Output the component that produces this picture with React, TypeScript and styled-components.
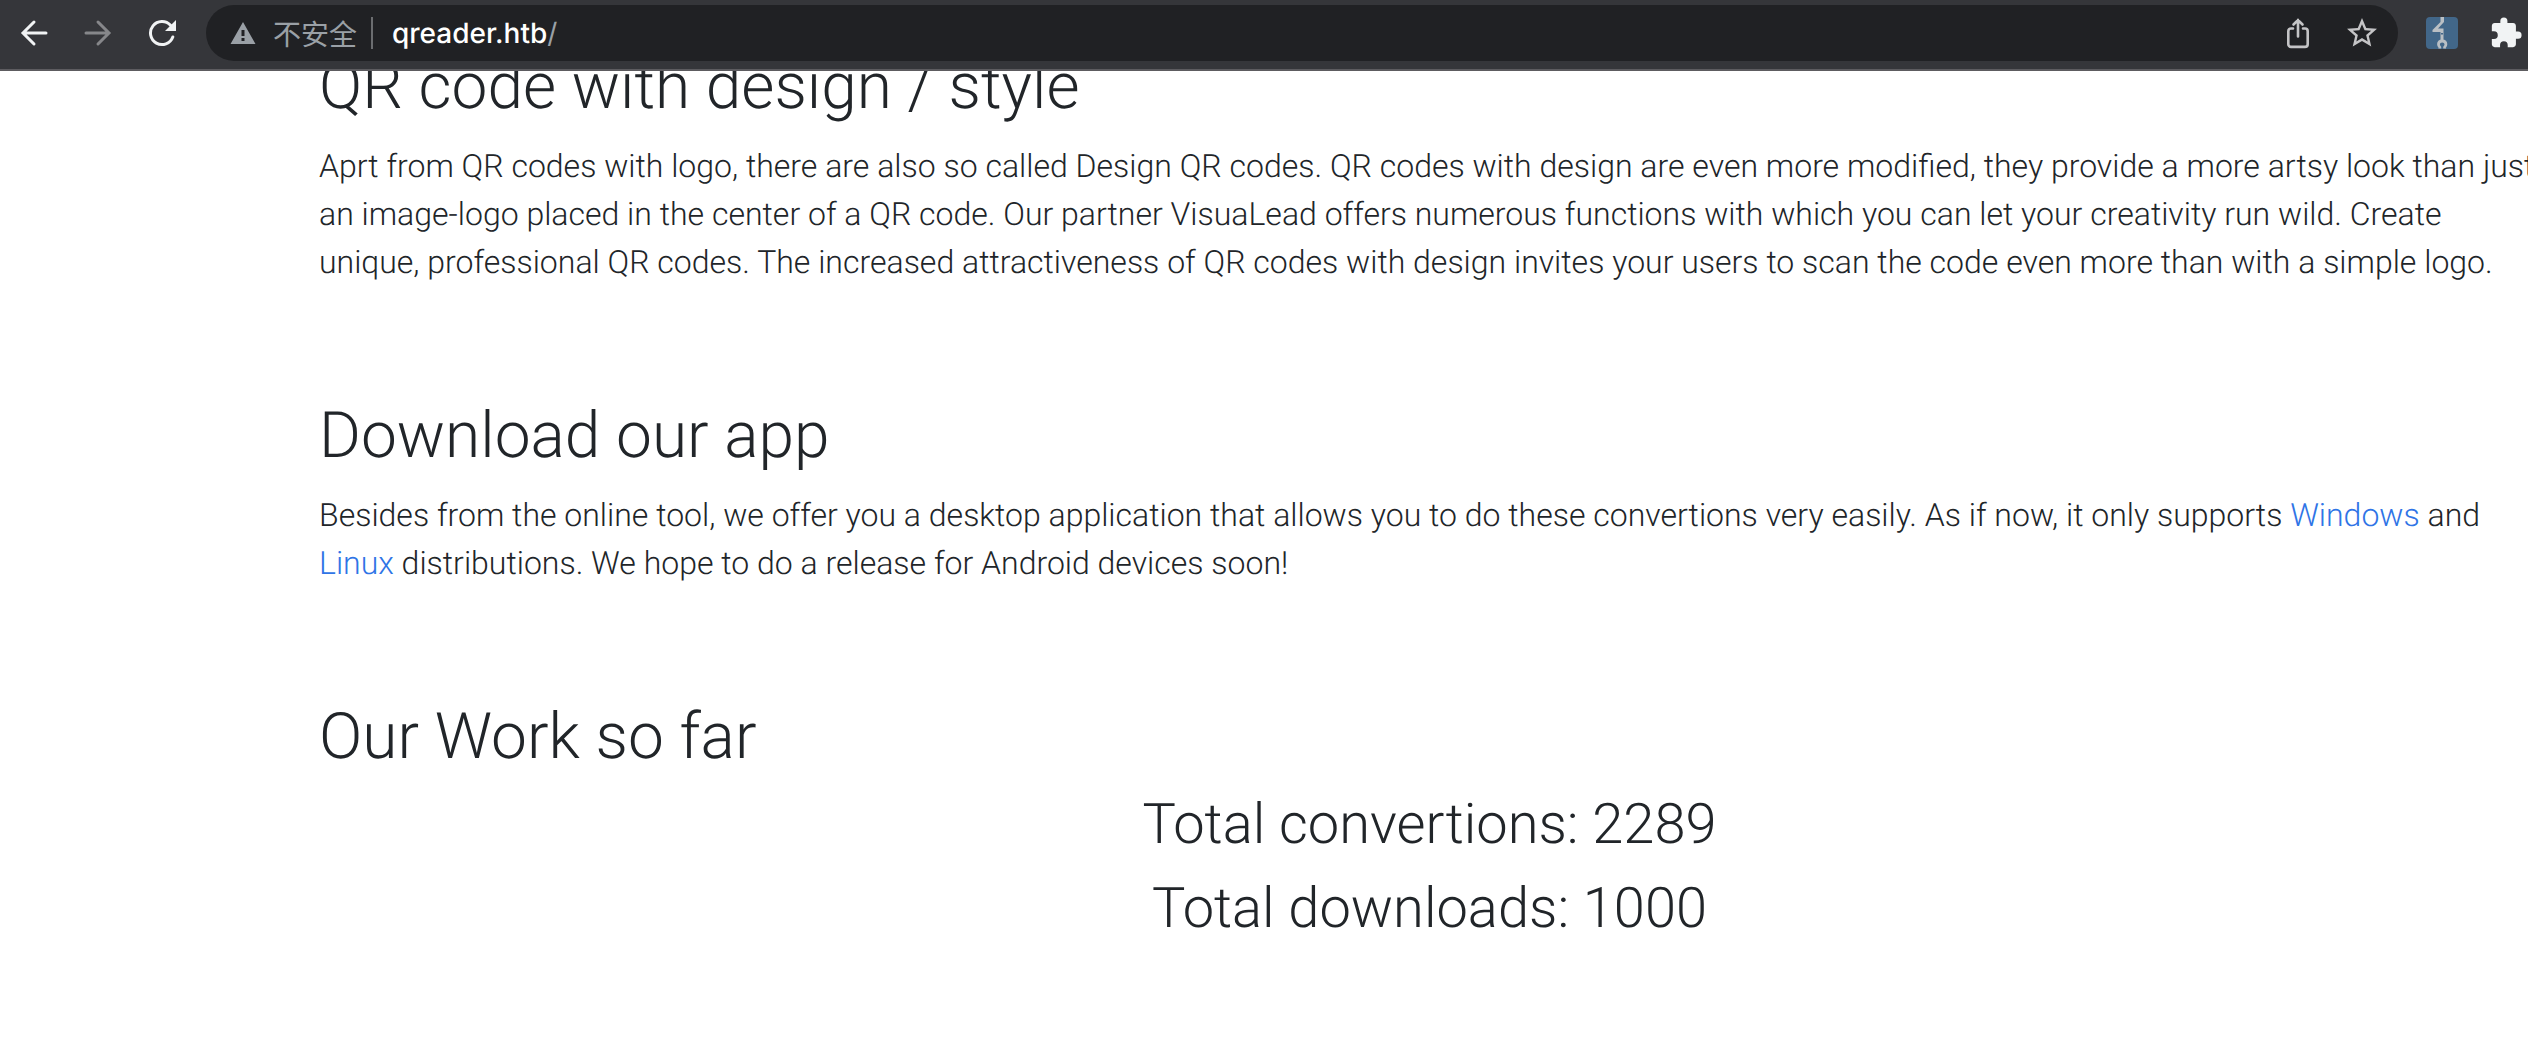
import React from "react";
import styled, { createGlobalStyle } from "styled-components";

const GlobalStyle = createGlobalStyle`
  *, *::before, *::after { box-sizing: border-box; }
  body {
    margin: 0;
    background: #fff;
    color: #212529;
    font-family: Roboto, "Liberation Sans", sans-serif;
    text-rendering: geometricPrecision;
  }
`;

const Browser = styled.div`
  display: flex;
  flex-direction: column;
  height: 100vh;
  overflow: hidden;
`;

const Toolbar = styled.header`
  position: relative;
  z-index: 1;
  display: flex;
  flex: none;
  align-items: center;
  height: 71px;
  margin-right: -10px;
  padding: 0 0 3px 8px;
  background: #35363a;
  border-bottom: 2px solid #5d5c60;
`;

const IconButton = styled.button<{ $dim?: boolean }>`
  display: flex;
  flex: none;
  align-items: center;
  justify-content: center;
  width: 64px;
  height: 56px;
  padding: 0;
  border: 0;
  background: none;
  color: ${(p) => (p.$dim ? "#86878a" : "#f1f3f4")};
`;

const NavButton = styled(IconButton)`
  width: 52px;
`;

const ForwardButton = styled(IconButton)`
  width: 76px;
`;

const AddressBar = styled.form`
  display: flex;
  flex: 1;
  align-items: center;
  height: 56px;
  margin: 0 12px 0 18px;
  padding: 0 4px 0 24px;
  border-radius: 28px;
  background: #202124;
  color: #9aa0a6;
`;

const Security = styled.button`
  display: flex;
  align-items: center;
  gap: 17px;
  height: 32px;
  padding: 0 14px 0 0;
  border: 0;
  border-right: 2px solid #6b6d70;
  background: none;
  color: #9aa0a6;
  font: 400 28px/32px "Noto Sans CJK SC", sans-serif;
  white-space: nowrap;
`;

const Address = styled.label`
  position: relative;
  display: flex;
  flex: 1;
  margin-left: 19px;
  font: 500 28px/40px Inter, Roboto, sans-serif;
`;

const AddressText = styled.span`
  color: #fff;
`;

const AddressPath = styled.span`
  color: #9aa0a6;
  font-weight: 400;
`;

const AddressInput = styled.input`
  position: absolute;
  inset: 0;
  width: 100%;
  padding: 0;
  border: 0;
  outline: 0;
  background: none;
  color: transparent;
  font: inherit;
`;

const Page = styled.main`
  margin: -23px -12px 0 319px;
`;

const Section = styled.section`
  margin-bottom: 111px;
`;

const Heading = styled.h2`
  margin: 0 0 17px;
  font-size: 64px;
  font-weight: 300;
  line-height: 77px;
`;

const Text = styled.p`
  margin: 0;
  font-size: 32px;
  font-weight: 300;
  line-height: 48px;
`;

const Link = styled.a`
  color: #2f74e6;
  text-decoration: none;
`;

const Total = styled.h3`
  margin: 0 0 20px;
  font-size: 56px;
  font-weight: 300;
  line-height: 64px;
  text-align: center;
`;

const BackIcon = () => (
  <svg width="28" height="28" viewBox="0 0 28 28" fill="none" stroke="currentColor" strokeWidth="3" strokeLinecap="round">
    <path d="M26 14H3.500M14 3 3 14l11 11" />
  </svg>
);

const ForwardIcon = () => (
  <svg width="28" height="28" viewBox="0 0 28 28" fill="none" stroke="currentColor" strokeWidth="3" strokeLinecap="round">
    <path d="M2 14h22.500M14 3l11 11-11 11" />
  </svg>
);

const ReloadIcon = () => (
  <svg width="28" height="28" viewBox="0 0 28 28">
    <path d="M24.800 18A11.500 11.500 0 1 1 22.500 6.300" fill="none" stroke="currentColor" strokeWidth="3" strokeLinecap="round" />
    <path d="M28 1v11H17z" fill="currentColor" />
  </svg>
);

const WarningIcon = () => (
  <svg width="26" height="24" viewBox="0 0 26 24">
    <path d="M13 1 25.500 23H.5zM11.500 9v6h3V9zm0 8v3h3v-3z" fill="currentColor" fillRule="evenodd" />
  </svg>
);

const ShareIcon = () => (
  <svg width="26" height="32" viewBox="0 0 26 32" fill="none" stroke="#c4c4c6" strokeWidth="2.600" strokeLinecap="round">
    <path d="M8 11.500H6a2.700 2.700 0 0 0-2.700 2.700v13A2.700 2.700 0 0 0 6 29.900h14a2.700 2.700 0 0 0 2.700-2.700v-13a2.700 2.700 0 0 0-2.700-2.700h-2M13 19.500V3M8.500 7.500 13 3l4.500 4.500" />
  </svg>
);

const StarIcon = () => (
  <svg width="36" height="36" viewBox="0 0 24 24">
    <path
      d="M22 9.240l-7.190-.62L12 2 9.190 8.630 2 9.240l5.460 4.730L5.820 21 12 17.270 18.180 21l-1.630-7.030L22 9.240zM12 15.400l-3.760 2.270 1-4.280-3.320-2.880 4.380-.38L12 6.100l1.710 4.040 4.380.38-3.320 2.880 1 4.280L12 15.400z"
      fill="#c4c4c6"
    />
  </svg>
);

const WrenchIcon = () => (
  <svg width="32" height="32" viewBox="0 0 32 32">
    <rect width="32" height="32" rx="4" fill="#426789" />
    <path d="M14.500 0h3.500v5l-6 6.500h5.500V24h-3v-9H6.500v-2l8-8z" fill="#b9bfc4" />
    <path d="M15 16h2v1.500h-2z" fill="#426789" />
    <path d="M13.800 31.500v-1.200a4 4 0 0 1-1.300-3c0-2 1.600-3.300 3.700-3.300s3.700 1.300 3.700 3.300a4 4 0 0 1-1.300 3v1.200" fill="none" stroke="#b9bfc4" strokeWidth="2.800" />
  </svg>
);

const PuzzleIcon = () => (
  <svg width="34" height="34" viewBox="0 0 24 24">
    <path
      d="M20.500 11H19V7c0-1.100-.9-2-2-2h-4V3.500a2.500 2.500 0 0 0-5 0V5H4c-1.100 0-2 .9-2 2v3.800h1.500a2.700 2.700 0 0 1 0 5.400H2V20c0 1.100.9 2 2 2h3.800v-1.500a2.700 2.700 0 0 1 5.400 0V22H17c1.100 0 2-.9 2-2v-4h1.500a2.500 2.500 0 0 0 0-5z"
      fill="currentColor"
    />
  </svg>
);

export default function App() {
  return (
    <Browser>
      <GlobalStyle />
      <Toolbar>
        <NavButton aria-label="Back"><BackIcon /></NavButton>
        <ForwardButton aria-label="Forward" $dim><ForwardIcon /></ForwardButton>
        <NavButton aria-label="Reload"><ReloadIcon /></NavButton>
        <AddressBar>
          <Security type="button"><WarningIcon />不安全</Security>
          <Address>
            <AddressText>qreader.htb</AddressText>
            <AddressPath>/</AddressPath>
            <AddressInput aria-label="Address" />
          </Address>
          <IconButton type="button" aria-label="Share"><ShareIcon /></IconButton>
          <IconButton type="button" aria-label="Bookmark"><StarIcon /></IconButton>
        </AddressBar>
        <IconButton aria-label="Wrench extension"><WrenchIcon /></IconButton>
        <IconButton aria-label="Extensions"><PuzzleIcon /></IconButton>
      </Toolbar>
      <Page>
        <Section>
          <Heading>QR code with design / style</Heading>
          <Text>
            Aprt from QR codes with logo, there are also so called Design QR codes. QR codes with design are even more
            modified, they provide a more artsy look than just an image-logo placed in the center of a QR code. Our
            partner VisuaLead offers numerous functions with which you can let your creativity run wild. Create unique,
            professional QR codes. The increased attractiveness of QR codes with design invites your users to scan the
            code even more than with a simple logo.
          </Text>
        </Section>
        <Section>
          <Heading>Download our app</Heading>
          <Text>
            Besides from the online tool, we offer you a desktop application that allows you to do these convertions
            very easily. As if now, it only supports <Link href="#windows">Windows</Link> and{" "}
            <Link href="#linux">Linux</Link> distributions. We hope to do a release for Android devices soon!
          </Text>
        </Section>
        <Section>
          <Heading>Our Work so far</Heading>
          <Total>Total convertions: 2289</Total>
          <Total>Total downloads: 1000</Total>
        </Section>
      </Page>
    </Browser>
  );
}
